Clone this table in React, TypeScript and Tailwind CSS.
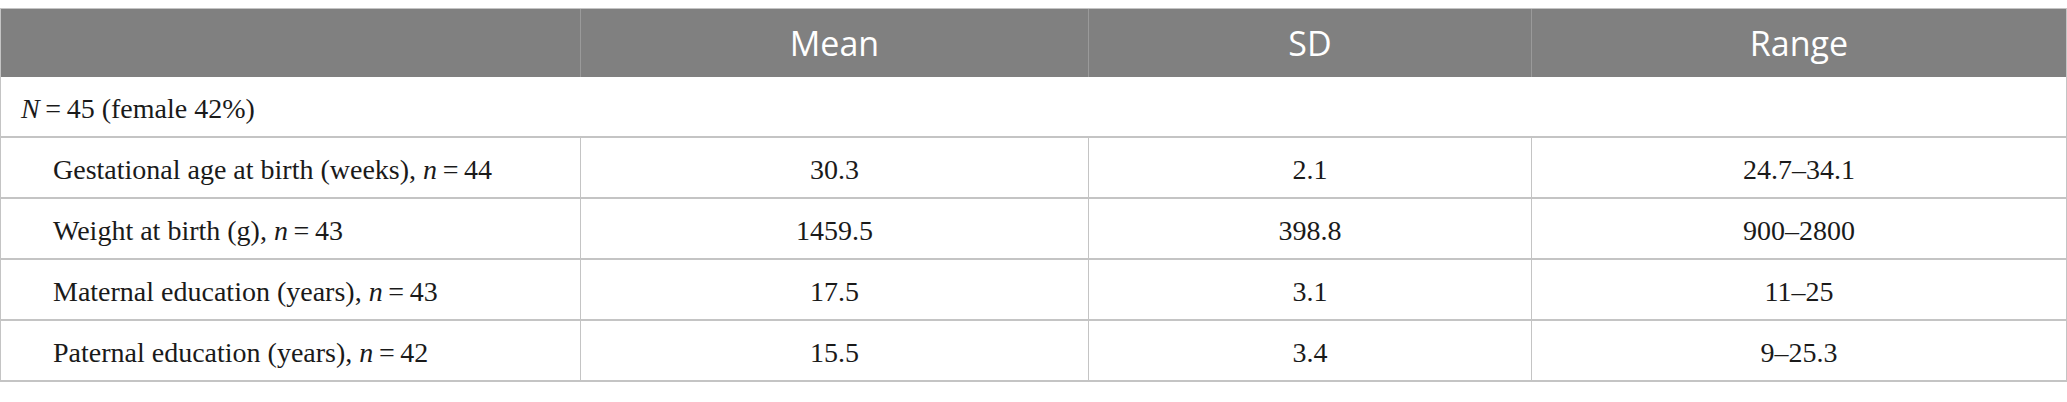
const rows = [
  { label: 'Gestational age at birth (weeks), ', n: '44', mean: '30.3', sd: '2.1', range: '24.7–34.1' },
  { label: 'Weight at birth (g), ', n: '43', mean: '1459.5', sd: '398.8', range: '900–2800' },
  { label: 'Maternal education (years), ', n: '43', mean: '17.5', sd: '3.1', range: '11–25' },
  { label: 'Paternal education (years), ', n: '42', mean: '15.5', sd: '3.4', range: '9–25.3' },
]

const cols = 'grid grid-cols-[580px_508px_443px_1fr]'

export default function App() {
  return (
    <div className="w-[2067px] h-[402px] bg-white pt-2">
      <div className="border-t border-l border-r border-[#c4c4c4] font-['Liberation_Serif',serif] text-[28px] text-[#1a1a1a]">
        {/* header */}
        <div className={`${cols} h-[68px] bg-[#808080] text-white font-['Open_Sans',sans-serif] text-[34px]`}>
          <div className="border-r border-[#9a9a9a]" />
          <div className="flex items-center justify-center border-r border-[#9a9a9a]">Mean</div>
          <div className="flex items-center justify-center border-r border-[#9a9a9a]">SD</div>
          <div className="flex items-center justify-center">Range</div>
        </div>

        <div className="h-[61px] flex items-center pl-5 pt-1 border-b-2 border-[#c4c4c4]">
          <span>
            <i>N</i>{'\u2009=\u200945 (female 42%)'}
          </span>
        </div>

        {rows.map((r) => (
          <div key={r.label} className={`${cols} h-[61px] border-b-2 border-[#c4c4c4]`}>
            <div className="flex items-center pl-[52px] pt-1 border-r border-[#c4c4c4]">
              <span>
                {r.label}
                <i>n</i>
                {'\u2009=\u2009' + r.n}
              </span>
            </div>
            <div className="flex items-center justify-center pt-1 border-r border-[#c4c4c4]">{r.mean}</div>
            <div className="flex items-center justify-center pt-1 border-r border-[#c4c4c4]">{r.sd}</div>
            <div className="flex items-center justify-center pt-1">{r.range}</div>
          </div>
        ))}
      </div>
    </div>
  )
}
